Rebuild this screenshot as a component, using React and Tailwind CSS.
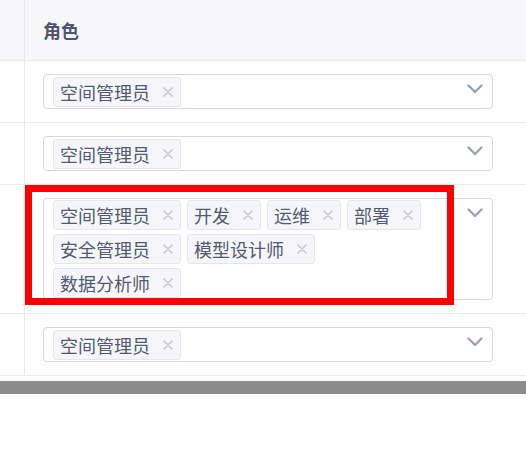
import React from "react";

const rows = [
  ["空间管理员"],
  ["空间管理员"],
  ["空间管理员", "开发", "运维", "部署", "安全管理员", "模型设计师", "数据分析师"],
  ["空间管理员"],
];

const CloseIcon = () => (
  <svg width="10" height="10" viewBox="0 0 10 10" className="shrink-0">
    <path d="M1 1 L9 9 M9 1 L1 9" stroke="#c6c9da" strokeWidth="1.7" strokeLinecap="round" />
  </svg>
);

const Chevron = () => (
  <svg width="16" height="10" viewBox="0 0 16 10">
    <path d="M1.5 1.5 L8 8 L14.5 1.5" fill="none" stroke="#9aa1bd" strokeWidth="2.4" strokeLinecap="round" strokeLinejoin="round" />
  </svg>
);

const Tag = ({ label }) => (
  <span className="flex h-[30px] items-center gap-[13px] rounded-[3px] border border-[#e4e5ef] bg-[#f6f6fa] pl-[6px] pr-[7px] text-[18px] leading-[28px] text-[#515a6e]">
    {label}
    <CloseIcon />
  </span>
);

const MultiSelect = ({ values }) => (
  <div className="relative flex min-h-[35px] w-[450px] items-center rounded-[4px] border border-[#d5d7e5] bg-white pl-[9px] pr-[48px]">
    <div className="flex flex-wrap gap-x-[6px] gap-y-[4px] py-[1px]">
      {values.map((v) => (
        <Tag key={v} label={v} />
      ))}
    </div>
    <span className="absolute right-[9px] top-[9px]">
      <Chevron />
    </span>
  </div>
);

export default function App() {
  return (
    <div className="relative h-[469px] w-[526px] overflow-hidden bg-white font-['Noto_Sans_CJK_SC',sans-serif]">
      <div className="flex border-b border-[#e8e9f1] bg-[#f7f7fa]">
        <div className="h-[60px] w-[25px] border-r border-[#e6e7f1]" />
        <div className="flex flex-1 items-center pl-[18px] text-[18px] font-bold text-[#4f5570]">
          角色
        </div>
      </div>
      {rows.map((values, i) => (
        <div key={i} className="flex border-b border-[#e8e9f1]">
          <div className="w-[25px] border-r border-[#e6e7f1]" />
          <div className="flex-1 px-[18px] py-[13px]">
            <MultiSelect values={values} />
          </div>
        </div>
      ))}
      <div className="h-[5px]" />
      <div className="h-[13px] bg-[#8b8b8b]" />
      <div className="h-[5px] bg-[#fafafa]" />

      <div className="pointer-events-none absolute left-[25px] top-[185px] h-[120px] w-[429px] border-[7px] border-[#ff0000]" />
    </div>
  );
}
